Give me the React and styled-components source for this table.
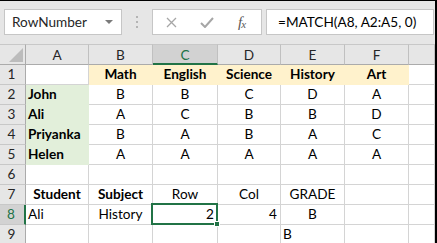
import React from "react";
import styled, { createGlobalStyle, css } from "styled-components";

const GREEN = "#217346";
const GRID = "#d4d4d4";
const FONT = `"Lato", "Liberation Sans", sans-serif`;

const columns = ["A", "B", "C", "D", "E", "F", ""];

const c = (text, opts = {}) => ({ text, ...opts });

const rows = [
  [
    c(""),
    c("Math", { bold: true, fill: "yellow" }),
    c("English", { bold: true, fill: "yellow" }),
    c("Science", { bold: true, fill: "yellow" }),
    c("History", { bold: true, fill: "yellow" }),
    c("Art", { bold: true, fill: "yellow" }),
    c(""),
  ],
  ["John", "B", "B", "C", "D", "A"],
  ["Ali", "A", "C", "B", "B", "D"],
  ["Priyanka", "B", "A", "B", "A", "C"],
  ["Helen", "A", "A", "A", "A", "A"],
  [],
  [
    c("Student", { bold: true }),
    c("Subject", { bold: true }),
    c("Row"),
    c("Col"),
    c("GRADE"),
  ],
  [
    c("Ali", { align: "left" }),
    c("History"),
    c("2", { align: "right", selected: true }),
    c("4", { align: "right" }),
    c("B"),
  ],
  [c(""), c(""), c(""), c(""), c("B", { align: "left" })],
];

const normalize = (row) => {
  const out = [];
  for (let i = 0; i < 7; i++) {
    const v = row[i];
    if (v === undefined) out.push(c(""));
    else if (typeof v === "string") {
      // rows 2-5: name column is bold, left and green
      out.push(
        i === 0
          ? c(v, { bold: true, align: "left", fill: "green" })
          : c(v)
      );
    } else out.push(v);
  }
  return out;
};

const GlobalStyle = createGlobalStyle`
  body {
    margin: 0;
    background: #ffffff;
    font-family: ${FONT};
  }
  * { box-sizing: border-box; }
`;

const Frame = styled.div`
  width: 437px;
  height: 243px;
  overflow: hidden;
  background: #e6e6e6;
  border-top: 1px solid #000;
  border-right: 2px solid #000;
`;

const FormulaBar = styled.div`
  height: 43px;
  display: flex;
  align-items: flex-start;
  padding: 8px 0 0 4px;
`;

const Box = styled.div`
  height: 26px;
  background: #fff;
  border: 1px solid #c6c6c6;
  display: flex;
  align-items: center;
`;

const NameBox = styled(Box)`
  width: 118px;
  padding: 0 8px 0 7px;
  justify-content: space-between;
  font-size: 13.6px;
  color: #262626;
`;

const Caret = styled.span`
  width: 0;
  height: 0;
  border-left: 4px solid transparent;
  border-right: 4px solid transparent;
  border-top: 4px solid #7a7a7a;
`;

const Grip = styled.div`
  width: 30px;
  height: 26px;
  display: flex;
  flex-direction: column;
  align-items: center;
  justify-content: center;
  gap: 3px;
  span {
    width: 2px;
    height: 2px;
    background: #b4b4b4;
  }
`;

const IconBox = styled(Box)`
  width: 110px;
  padding: 0 0 0 13px;
  gap: 23px;
`;

const FxLabel = styled.span`
  font-family: "Liberation Serif", serif;
  font-style: italic;
  font-size: 15px;
  color: #595959;
  letter-spacing: -1px;
  margin-left: 1px;
  sub {
    font-size: 11px;
    vertical-align: -1px;
  }
`;

const FormulaInput = styled(Box)`
  flex: 1;
  margin: 0 1px 0 4px;
  padding-left: 11px;
  font-size: 13.6px;
  color: #000;
`;

const Sheet = styled.div`
  display: grid;
  grid-template-columns: 26px 63px 64px 65px 63px 64px 64px 1fr;
  grid-template-rows: 21px repeat(9, 20px);
  background: #fff;
  font-size: 13.6px;
`;

const Corner = styled.div`
  background: #e6e6e6;
  border-top: 1px solid #c8c8c8;
  border-right: 1px solid #ababab;
  border-bottom: 1px solid #ababab;
  svg {
    display: block;
  }
`;

const ColHeader = styled.div`
  background: ${(p) => (p.$active ? "#d2d2d2" : "#e6e6e6")};
  color: ${(p) => (p.$active ? GREEN : "#262626")};
  border-top: 1px solid #c8c8c8;
  border-right: 1px solid #c0c0c0;
  border-bottom: ${(p) => (p.$active ? `2px solid ${GREEN}` : "1px solid #ababab")};
  display: flex;
  align-items: center;
  justify-content: center;
  padding-top: ${(p) => (p.$active ? "1px" : "0")};
`;

const RowHeader = styled.div`
  background: ${(p) => (p.$active ? "#d2d2d2" : "#e6e6e6")};
  color: ${(p) => (p.$active ? GREEN : "#262626")};
  border-right: ${(p) => (p.$active ? `2px solid ${GREEN}` : "1px solid #ababab")};
  border-bottom: 1px solid #c8c8c8;
  display: flex;
  align-items: flex-end;
  justify-content: center;
  padding: 0 2px 2px 0;
  line-height: 15px;
`;

const fills = {
  yellow: "#fff2cc",
  green: "#e2efda",
};

const Cell = styled.div`
  position: relative;
  border-right: 1px solid ${(p) => (p.$fill ? fills[p.$fill] : GRID)};
  border-bottom: 1px solid ${(p) => (p.$fill ? fills[p.$fill] : GRID)};
  background: ${(p) => (p.$fill ? fills[p.$fill] : "#fff")};
  color: #000;
  font-weight: ${(p) => (p.$bold ? 700 : 400)};
  display: flex;
  align-items: flex-end;
  line-height: 15px;
  padding: 0 2px 2px 2px;
  white-space: nowrap;
  ${(p) =>
    p.$align === "left"
      ? css`justify-content: flex-start;`
      : p.$align === "right"
      ? css`justify-content: flex-end; padding-right: 3px;`
      : css`justify-content: center;`}
`;

const Selection = styled.div`
  position: absolute;
  top: -2px;
  left: -2px;
  right: -1px;
  bottom: -1px;
  border: 2px solid ${GREEN};
  z-index: 2;
  pointer-events: none;
`;

const Handle = styled.span`
  position: absolute;
  right: -4px;
  bottom: -4px;
  width: 6px;
  height: 6px;
  background: ${GREEN};
  border: 1px solid #fff;
`;

const XIcon = () => (
  <svg width="11" height="11" viewBox="0 0 11 11">
    <path d="M1 1 L10 10 M10 1 L1 10" stroke="#a6a6a6" strokeWidth="1.3" fill="none" />
  </svg>
);

const CheckIcon = () => (
  <svg width="14" height="11" viewBox="0 0 14 11">
    <path d="M1 6 L5 10 L13 1" stroke="#a6a6a6" strokeWidth="2" fill="none" />
  </svg>
);

export default function App() {
  return (
    <Frame>
      <GlobalStyle />
      <FormulaBar>
        <NameBox>
          <span>RowNumber</span>
          <Caret />
        </NameBox>
        <Grip>
          <span />
          <span />
          <span />
        </Grip>
        <IconBox>
          <XIcon />
          <CheckIcon />
          <FxLabel>
            f<sub>x</sub>
          </FxLabel>
        </IconBox>
        <FormulaInput>=MATCH(A8, A2:A5, 0)</FormulaInput>
      </FormulaBar>
      <Sheet>
        <Corner>
          <svg width="25" height="19" viewBox="0 0 25 19">
            <polygon points="23,3 23,17 9,17" fill="#bcbcbc" />
          </svg>
        </Corner>
        {columns.map((col, i) => (
          <ColHeader key={i} $active={col === "C"}>
            {col}
          </ColHeader>
        ))}
        {rows.map((row, r) => (
          <React.Fragment key={r}>
            <RowHeader $active={r === 7}>{r + 1}</RowHeader>
            {normalize(row).map((cell, i) => (
              <Cell
                key={i}
                $bold={cell.bold}
                $align={cell.align}
                $fill={cell.fill}
              >
                {cell.text}
                {cell.selected && (
                  <Selection>
                    <Handle />
                  </Selection>
                )}
              </Cell>
            ))}
          </React.Fragment>
        ))}
      </Sheet>
    </Frame>
  );
}
